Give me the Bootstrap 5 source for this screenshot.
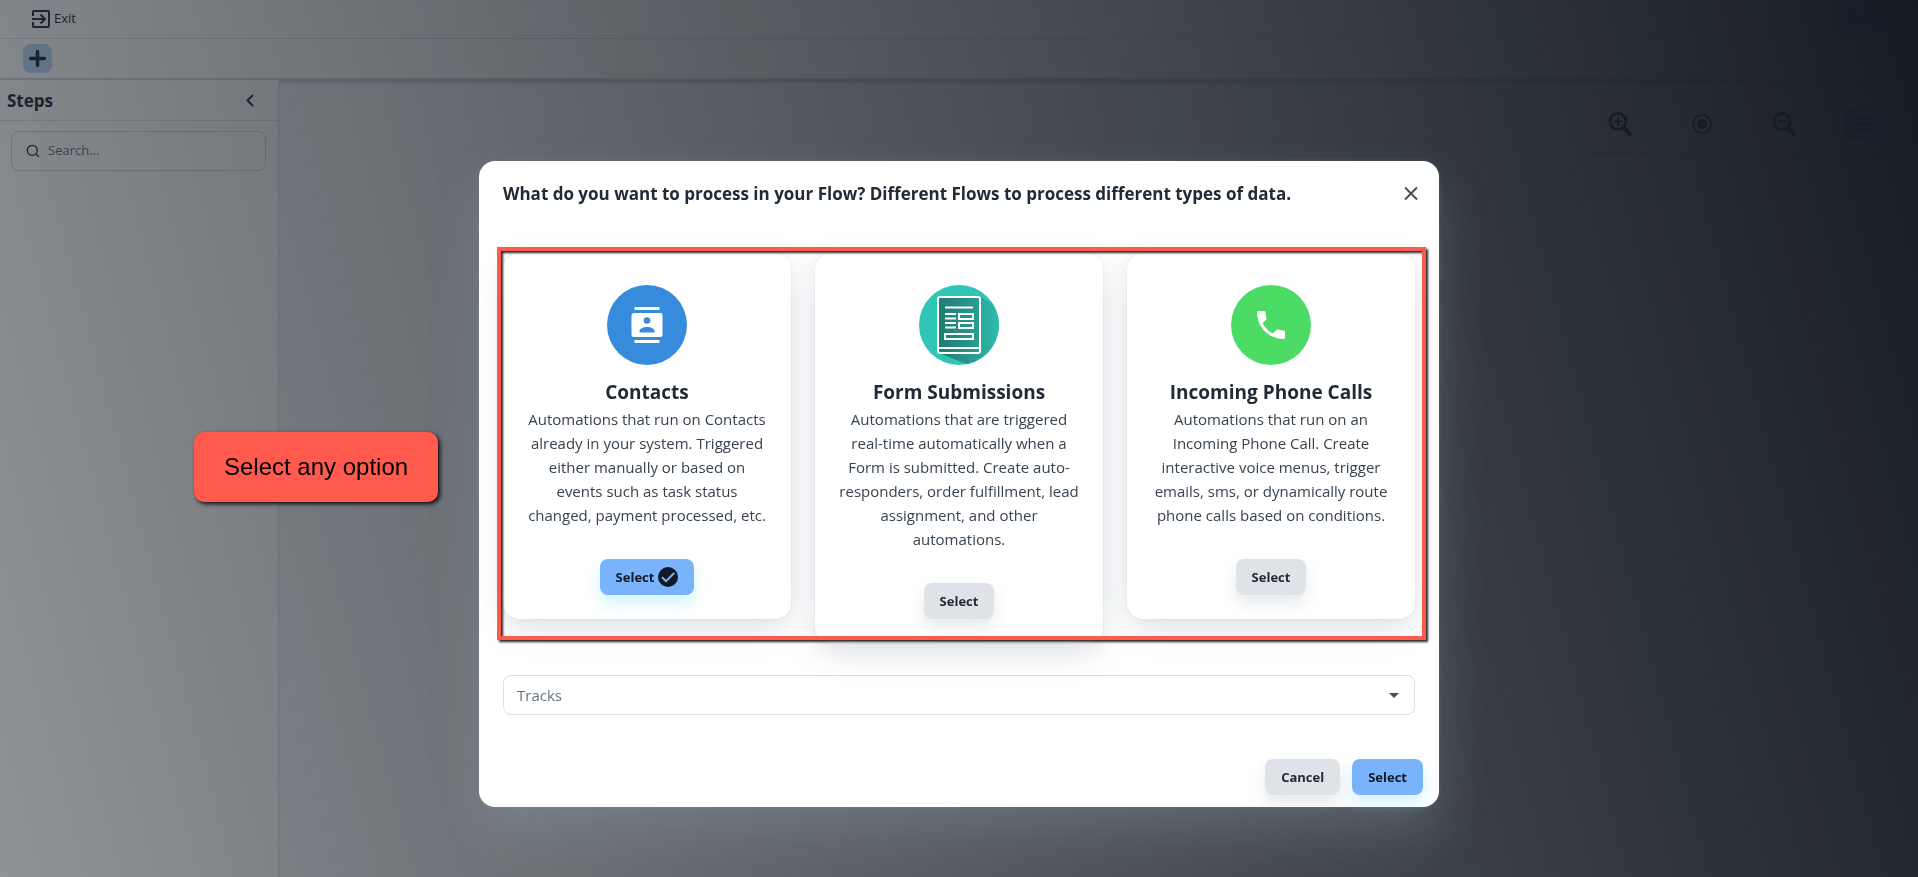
<!DOCTYPE html>
<html lang="en">
<head>
<meta charset="utf-8">
<meta name="viewport" content="width=device-width, initial-scale=1">
<title>Flow builder</title>
<link href="https://cdn.jsdelivr.net/npm/bootstrap@5.3.0/dist/css/bootstrap.min.css" rel="stylesheet">
<style>
  body { font-family: "Open Sans", "Noto Sans", sans-serif; color: #212b36; background: #fff; }
  .app-shell { min-height: 100vh; }
  .line-below { border-bottom: 1px solid #dfe3e8; }
  .top-row { height: 39px; padding-left: 32px; padding-right: 23px; }
  .tool-row { height: 41px; padding-left: 23px; border-bottom: 2px solid #d3d8de; }
  .exit-link { font-size: 13px; color: #212b36; gap: 4px; }
  .save-btn { width: 65px; height: 30px; font-size: 13px; font-weight: 700; background: #78b3fb; border-radius: 8px; padding: 0; }
  .add-btn { width: 29px; height: 29px; background: #bcd9fc; border-radius: 8px; }
  .side-panel { width: 279px; border-right: 1px solid #e2e6ea; }
  .side-head { height: 41px; padding: 2px 20px 0 7px; }
  .side-head h2 { font-size: 17px; font-weight: 700; }
  .search-box { margin: 10px 12px 10px 11px; height: 40px; border: 1px solid #d3d8de; border-radius: 8px; padding: 0 14px; gap: 8px; }
  .search-box input { font-size: 13px; border: 0; background: none; outline: 0; min-width: 0; padding: 0; }
  .search-box input::placeholder { color: #637381; opacity: 1; }
  .canvas-area { background: #f4f6f8; box-shadow: inset 0 4px 4px -2px rgba(99,115,129,.4); padding: 16px 24px; }
  .zoom-panel { height: 56px; background: #fff; border-radius: 8px; padding: 0 6px 0 12px; gap: 38px; box-shadow: 0 1px 2px rgba(99,115,129,.4); }
  .zoom-panel .btn { width: 44px; height: 32px; }
  .menu-btn { background: #78b3fb; border-radius: 8px; }

  .flow-modal { background: linear-gradient(75deg, rgba(22,28,36,.48) 0%, #161c24 100%); }
  .flow-modal .modal-dialog { width: 52%; min-width: 640px; max-width: 960px; margin: 161px auto 32px; }
  .flow-modal .modal-content { border: 0; border-radius: 16px; color: #212b36;
    box-shadow: 0 0 4px 0 rgba(145,158,171,.24), 0 24px 48px 0 rgba(145,158,171,.3); }
  .flow-modal .modal-header { padding: 17px 20px 15px 24px; border: 0; }
  .flow-modal .modal-title { font-size: 17px; font-weight: 700; line-height: 32px; }
  .close-btn { width: 16px; height: 16px; }
  .flow-modal .modal-body { padding: 28px 24px 0; }
  .option-grid { display: grid; grid-template-columns: repeat(3, 1fr); gap: 24px; align-items: start; }
  .option-card { background: #fff; border-radius: 16px; padding: 32px 23px 24px; text-align: center;
    box-shadow: 0 0 2px 0 rgba(145,158,171,.24), 0 16px 32px -4px rgba(145,158,171,.24), 0 0 24px 0 rgba(145,158,171,.12); }
  .option-card h3 { font-size: 19px; font-weight: 700; line-height: 30px; margin: 12px 0 0; }
  .option-card p { font-size: 15px; line-height: 24px; margin: 0 -8px 32px; color: #364350; }
  .flow-btn { height: 36px; border: 0; border-radius: 8px; padding: 0 16px; font-size: 13px; font-weight: 700; line-height: 36px; }
  .btn-soft, .btn-soft:hover { background: #dfe3e8; color: #212b36; box-shadow: 0 8px 16px 0 rgba(145,158,171,.24); }
  .btn-sky, .btn-sky:hover { background: #78b3fb; color: #111a24; box-shadow: 0 8px 16px 0 rgba(100,215,250,.3); }
  .highlight { position: absolute; inset: -6px -11px 3px -6px; border: 4px solid #ff5a4d; pointer-events: none;
    filter: drop-shadow(2px 2px 1px rgba(0,0,0,.85)); }
  .track-select { height: 40px; margin-top: 32px; border: 1px solid #dce0e4; border-radius: 8px; padding: 0 13px; font-size: 15px; color: #637381;
    background: #fff url("data:image/svg+xml,%3Csvg xmlns='http://www.w3.org/2000/svg' width='10' height='5'%3E%3Cpath d='M0 0h10L5 5z' fill='%23454f5b'/%3E%3C/svg%3E") no-repeat right 15px center; background-size: 10px 5px; }
  .flow-modal .modal-footer { border: 0; padding: 44px 16px 12px; gap: 12px; }
  .flow-modal .modal-footer > * { margin: 0; }
  .callout-note { position: absolute; left: 194px; top: 432px; padding: 17px 30px; background: #ff5a4d; color: #000; border-radius: 10px;
    font: 24px/36px "Liberation Sans", Arial, sans-serif; box-shadow: 2px 2px 4px rgba(0,0,0,.9); }
</style>
</head>
<body>
<div class="app-shell d-flex flex-column">
  <header>
    <div class="top-row line-below d-flex align-items-center justify-content-between">
      <a href="#" class="exit-link d-flex align-items-center text-decoration-none">
        <svg width="18" height="18" viewBox="0 0 18 18" fill="none" stroke="#26323d" stroke-width="2"><path d="M1 6V2q0-1 1-1h14q1 0 1 1v14q0 1-1 1H2q-1 0-1-1v-4M0 9h12M8.500 4.500L13 9l-4.500 4.500"/></svg>
        Exit</a>
      <button type="button" class="btn save-btn">Save</button>
    </div>
    <div class="tool-row d-flex align-items-center">
      <button type="button" class="btn add-btn p-0 d-flex align-items-center justify-content-center" aria-label="Add">
        <svg width="17" height="17" viewBox="0 0 17 17" stroke="#212b36" stroke-width="3.500" stroke-linecap="round"><path d="M8.500 1.700v13.600M1.700 8.500h13.600"/></svg>
      </button>
    </div>
  </header>
  <div class="d-flex flex-grow-1">
    <aside class="side-panel flex-shrink-0">
      <div class="side-head line-below d-flex align-items-center justify-content-between">
        <h2 class="m-0">Steps</h2>
        <button type="button" class="btn p-0 border-0 d-flex" aria-label="Collapse">
          <svg width="16" height="16" viewBox="0 0 16 16" fill="none" stroke="#26323d" stroke-width="2"><path d="M11 2L5.500 7.500 11 13"/></svg>
        </button>
      </div>
      <label class="search-box d-flex align-items-center">
        <svg width="14" height="14" viewBox="0 0 14 14" fill="none" stroke="#26323d" stroke-width="1.300"><circle cx="6.300" cy="6.300" r="5"/><path d="M10 10l3 3"/></svg>
        <input type="text" class="flex-grow-1" placeholder="Search..." aria-label="Search steps">
      </label>
    </aside>
    <main class="canvas-area flex-grow-1 d-flex justify-content-end align-items-start">
      <div class="zoom-panel d-flex align-items-center">
        <button type="button" class="btn p-0 border-0 d-flex align-items-center justify-content-center" aria-label="Zoom in">
          <svg width="26" height="26" viewBox="0 0 26 26" fill="none" stroke="#212b36" stroke-width="3"><circle cx="11" cy="10.500" r="8"/><path d="M17 17l7 7" stroke-width="4"/><path d="M11 6v9M6.500 10.500h9" stroke-width="2"/></svg>
        </button>
        <button type="button" class="btn p-0 border-0 d-flex align-items-center justify-content-center" aria-label="Center">
          <svg width="22" height="22" viewBox="0 0 22 22"><circle cx="11" cy="11" r="9" fill="none" stroke="#212b36" stroke-width="2"/><circle cx="11" cy="11" r="5" fill="#212b36"/></svg>
        </button>
        <button type="button" class="btn p-0 border-0 d-flex align-items-center justify-content-center" aria-label="Zoom out">
          <svg width="26" height="26" viewBox="0 0 26 26" fill="none" stroke="#212b36" stroke-width="3"><circle cx="11" cy="10.500" r="8"/><path d="M17 17l7 7" stroke-width="4"/><path d="M6.500 10.500h9" stroke-width="2"/></svg>
        </button>
        <button type="button" class="btn menu-btn p-0 border-0 d-flex align-items-center justify-content-center" aria-label="Menu">
          <svg width="18" height="12" viewBox="0 0 18 12" stroke="#111a24" stroke-width="2"><path d="M0 1h18M0 6h18M0 11h18"/></svg>
        </button>
      </div>
    </main>
  </div>
</div>

<div class="modal show d-block flow-modal" role="dialog" aria-modal="true" aria-labelledby="flowTitle">
  <div class="modal-dialog">
    <div class="modal-content">
      <div class="modal-header">
        <h1 class="modal-title" id="flowTitle">What do you want to process in your Flow? Different Flows to process different types of data.</h1>
        <button type="button" class="btn close-btn p-0 border-0 d-flex" aria-label="Close">
          <svg width="16" height="16" viewBox="0 0 16 16" stroke="#454f5b" stroke-width="2"><path d="M2 1.500l12 12M14 1.500l-12 12"/></svg>
        </button>
      </div>
      <div class="modal-body">
        <div class="position-relative">
          <div class="option-grid">
            <section class="option-card">
              <svg width="80" height="80" viewBox="0 0 80 80"><circle cx="40" cy="40" r="40" fill="#368bdd"/><path d="M27.500 22h25v3h-25zM27.500 55h25v3h-25z" fill="#fff"/><rect x="24.500" y="28" width="31" height="24" rx="2.500" fill="#fff"/><circle cx="40" cy="35.500" r="3.300" fill="#368bdd"/><path d="M32.500 47.500v-1.500c0-2.500 4-4 7.500-4s7.500 1.500 7.500 4v1.500z" fill="#368bdd"/></svg>
              <h3>Contacts</h3>
              <p>Automations that run on Contacts<br>already in your system. Triggered<br>either manually or based on<br>events such as task status<br>changed, payment processed, etc.</p>
              <button type="button" class="btn flow-btn btn-sky d-inline-flex align-items-center">Select
                <svg class="ms-1" width="20" height="20" viewBox="0 0 20 20"><circle cx="10" cy="10" r="10" fill="#111a24"/><path d="M4 10.200l4 4 8.200-8.200" fill="none" stroke="#78b3fb" stroke-width="2"/></svg>
              </button>
            </section>
            <section class="option-card">
              <svg width="80" height="80" viewBox="0 0 80 80">
                <defs><linearGradient id="sheet" x1="0" x2="1"><stop offset="0" stop-color="#217a72"/><stop offset="1" stop-color="#2b9e92"/></linearGradient>
                <linearGradient id="cast" x1="0" x2="1"><stop offset="0" stop-color="#24766f"/><stop offset="1" stop-color="#2dbcae"/></linearGradient>
                <clipPath id="disc"><circle cx="40" cy="40" r="40"/></clipPath></defs>
                <circle cx="40" cy="40" r="40" fill="#2fc6b7"/>
                <path d="M61 12L80 22V80H50L20 68z" fill="url(#cast)" clip-path="url(#disc)"/>
                <rect x="19" y="12" width="42" height="56" rx="2" fill="url(#sheet)" stroke="#fff" stroke-width="2"/>
                <path d="M20 63h40M26 22.500h28M26 29h11M26 33.500h11M26 38h11M26 42.500h11M40 29h14v5H40zM40 38h14v5H40zM26 49h28v5H26z" fill="none" stroke="#fff" stroke-width="2"/>
              </svg>
              <h3>Form Submissions</h3>
              <p>Automations that are triggered<br>real-time automatically when a<br>Form is submitted. Create auto-<br>responders, order fulfillment, lead<br>assignment, and other<br>automations.</p>
              <button type="button" class="btn flow-btn btn-soft">Select</button>
            </section>
            <section class="option-card">
              <svg width="80" height="80" viewBox="0 0 80 80"><circle cx="40" cy="40" r="40" fill="#4cdb64"/><path transform="translate(21.300 21.300) scale(1.560)" d="M6.620 10.790c1.440 2.830 3.760 5.140 6.590 6.590l2.200-2.200c.27-.27.67-.36 1.020-.24 1.120.37 2.330.57 3.570.57.550 0 1 .45 1 1V20c0 .55-.45 1-1 1-9.390 0-17-7.610-17-17 0-.55.45-1 1-1h3.500c.55 0 1 .45 1 1 0 1.250.2 2.450.57 3.570.11.35.03.74-.25 1.020l-2.200 2.200z" fill="#fff"/></svg>
              <h3>Incoming Phone Calls</h3>
              <p>Automations that run on an<br>Incoming Phone Call. Create<br>interactive voice menus, trigger<br>emails, sms, or dynamically route<br>phone calls based on conditions.</p>
              <button type="button" class="btn flow-btn btn-soft">Select</button>
            </section>
          </div>
          <div class="highlight"></div>
        </div>
        <select class="form-select track-select" aria-label="Tracks"><option>Tracks</option></select>
      </div>
      <div class="modal-footer">
        <button type="button" class="btn flow-btn btn-soft">Cancel</button>
        <button type="button" class="btn flow-btn btn-sky">Select</button>
      </div>
    </div>
  </div>
  <div class="callout-note" role="note">Select any option</div>
</div>
<script src="https://cdn.jsdelivr.net/npm/bootstrap@5.3.0/dist/js/bootstrap.bundle.min.js"></script>
</body>
</html>
